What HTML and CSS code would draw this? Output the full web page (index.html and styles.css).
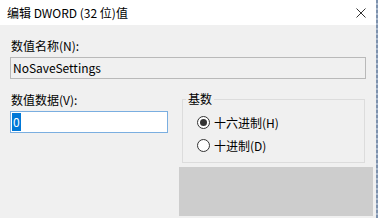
FILE: index.html
```html
<!DOCTYPE html>
<html lang="zh-CN">
<head>
    <meta charset="UTF-8">
    <title>编辑 DWORD (32 位)值</title>
    <link rel="stylesheet" href="styles.css">
</head>
<body>
    <div class="window">
        <div class="dialog">
            <div class="titlebar">
                <span class="title">编辑 DWORD (32 位)值</span>
                <svg class="close" width="10" height="10" viewBox="0 0 10 10">
                    <path d="M0.5 0.5 L9.5 9.5 M9.5 0.5 L0.5 9.5" stroke="#333" stroke-width="1" fill="none"/>
                </svg>
            </div>
            <div class="content">
                <div class="label">数值名称(N):</div>
                <div class="textbox name-box">NoSaveSettings</div>
                <div class="row">
                    <div class="left-col">
                        <div class="label">数值数据(V):</div>
                        <div class="textbox data-box"><span class="selected">0</span></div>
                    </div>
                    <div class="right-col">
                        <div class="group">
                            <div class="legend">基数</div>
                            <div class="radio-row">
                                <span class="radio checked"></span>
                                <span>十六进制(H)</span>
                            </div>
                            <div class="radio-row">
                                <span class="radio"></span>
                                <span>十进制(D)</span>
                            </div>
                        </div>
                        <div class="gray-panel"></div>
                    </div>
                </div>
            </div>
        </div>
        <div class="edge"></div>
    </div>
</body>
</html>
```

FILE: styles.css
```css
body {
    margin: 0;
    padding: 0;
    width: 378px;
    height: 218px;
    overflow: hidden;
    font-family: "Noto Sans CJK SC", "Noto Sans", sans-serif;
    font-size: 12px;
    color: #000;
    background: #f0f0f0;
}

.window {
    display: flex;
    height: 218px;
}

.dialog {
    width: 376px;
    display: flex;
    flex-direction: column;
    background: #f0f0f0;
}

.edge {
    width: 2px;
    background: repeating-linear-gradient(180deg, #7d92ae 0, #7d92ae 3px, #a9b8cc 3px, #a9b8cc 5px);
}

.titlebar {
    height: 25px;
    background: #fff;
    display: flex;
    align-items: center;
    justify-content: space-between;
    padding: 0 10px 0 7px;
}

.title {
    line-height: 16px;
}

.content {
    padding: 13px 10px 0 10px;
}

.label {
    line-height: 16px;
    padding-left: 1px;
}

.textbox {
    box-sizing: border-box;
    height: 22px;
    background: #fff;
    border: 1px solid #abadb3;
    line-height: 20px;
    padding-left: 2px;
}

.name-box {
    margin-top: 3px;
    width: 356px;
    background: #f0f0f0;
    border-color: #b9b9b9;
}

.row {
    display: flex;
    margin-top: 13px;
}

.left-col {
    width: 158px;
}

.data-box {
    margin-top: 3px;
    border-color: #7aaee0;
    padding-left: 1px;
    padding-top: 1px;
    line-height: 18px;
}

.selected {
    display: inline-block;
    background: #0078d7;
    color: #fff;
    padding: 0 1px;
    line-height: 18px;
}

.right-col {
    width: 194px;
    margin-left: 11px;
    margin-right: -7px;
}

.group {
    margin: 7px 0 0 3px;
    width: 183px;
    box-sizing: border-box;
    height: 64px;
    border: 1px solid #dcdcdc;
    padding-left: 14px;
}

.legend {
    width: fit-content;
    margin: -9px 0 0 -11px;
    padding: 0 2px;
    line-height: 16px;
    background: #f0f0f0;
}

.radio-row {
    display: flex;
    align-items: center;
    height: 16px;
    margin-top: 7px;
}

.radio {
    box-sizing: border-box;
    width: 13px;
    height: 13px;
    border: 1px solid #333;
    border-radius: 50%;
    background: #fff;
    margin-right: 4px;
    display: flex;
    align-items: center;
    justify-content: center;
}

.radio.checked::after {
    content: "";
    width: 7px;
    height: 7px;
    border-radius: 50%;
    background: #333;
}

.gray-panel {
    margin-top: 4px;
    height: 49px;
    background: #cdcdcd;
}
```
